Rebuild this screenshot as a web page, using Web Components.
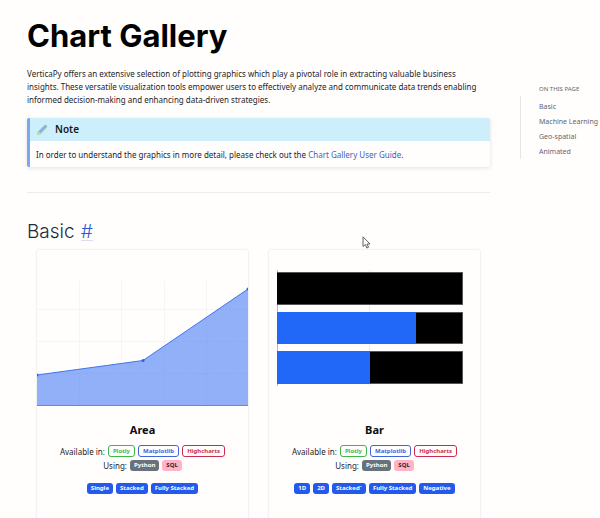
<!DOCTYPE html>
<html lang="en">
<head>
<meta charset="utf-8">
<title>Chart Gallery</title>
<style>
html, body { margin: 0; background: #fffefd; }
body { font: 8px/13px "Noto Sans", "Open Sans", sans-serif; color: #1e2329; height: 100vh; overflow: hidden; }
</style>
</head>
<body>
<gallery-page>
  <page-heading>Chart Gallery</page-heading>
  <page-intro>VerticaPy offers an extensive selection of plotting graphics which play a pivotal role in extracting valuable business insights. These versatile visualization tools empower users to effectively analyze and communicate data trends enabling informed decision-making and enhancing data-driven strategies.</page-intro>
  <note-box heading="Note">In order to understand the graphics in more detail, please check out the <text-link href="#guide">Chart Gallery User Guide</text-link>.</note-box>
  <gallery-section heading="Basic" anchor="basic">
    <chart-card heading="Area">
      <area-chart slot="chart"></area-chart>
      <tag-badge slot="libs" kind="plotly">Plotly</tag-badge>
      <tag-badge slot="libs" kind="matplotlib">Matplotlib</tag-badge>
      <tag-badge slot="libs" kind="highcharts">Highcharts</tag-badge>
      <tag-badge slot="langs" kind="python">Python</tag-badge>
      <tag-badge slot="langs" kind="sql">SQL</tag-badge>
      <tag-badge>Single</tag-badge>
      <tag-badge>Stacked</tag-badge>
      <tag-badge>Fully Stacked</tag-badge>
    </chart-card>
    <chart-card heading="Bar">
      <bar-chart slot="chart"></bar-chart>
      <tag-badge slot="libs" kind="plotly">Plotly</tag-badge>
      <tag-badge slot="libs" kind="matplotlib">Matplotlib</tag-badge>
      <tag-badge slot="libs" kind="highcharts">Highcharts</tag-badge>
      <tag-badge slot="langs" kind="python">Python</tag-badge>
      <tag-badge slot="langs" kind="sql">SQL</tag-badge>
      <tag-badge>1D</tag-badge>
      <tag-badge>2D</tag-badge>
      <tag-badge>Stacked`</tag-badge>
      <tag-badge>Fully Stacked</tag-badge>
      <tag-badge>Negative</tag-badge>
    </chart-card>
  </gallery-section>
  <page-toc slot="aside" heading="ON THIS PAGE">
    <toc-link href="#basic">Basic</toc-link>
    <toc-link href="#machine-learning">Machine Learning</toc-link>
    <toc-link href="#geo-spatial">Geo-spatial</toc-link>
    <toc-link href="#animated">Animated</toc-link>
  </page-toc>
</gallery-page>
<mouse-pointer></mouse-pointer>
<script>
function define(name, render) {
  customElements.define(name, class extends HTMLElement {
    constructor() {
      super();
      this.attachShadow({ mode: 'open' });
    }
    connectedCallback() {
      this.shadowRoot.innerHTML = render(this);
    }
  });
}
const attr = (el, name) => el.getAttribute(name) || '';

define('gallery-page', () => `
  <style>
    :host { display: grid; grid-template-columns: minmax(0, 1fr) 80px; column-gap: 30px; padding-left: 27px; }
    main { min-width: 0; }
    aside { padding-top: 83px; }
  </style>
  <main><slot></slot></main>
  <aside><slot name="aside"></slot></aside>`);

define('page-heading', () => `
  <style>
    :host { display: block; padding-top: 16px; }
    h1 { margin: 0; font: 700 31px/40px Inter, sans-serif; color: #000; }
  </style>
  <h1><slot></slot></h1>`);

define('page-intro', () => `
  <style>
    :host { display: block; padding: 11px 8px 0 0; }
    p { margin: 0; }
  </style>
  <p><slot></slot></p>`);

define('note-box', el => `
  <style>
    :host { display: block; margin-top: 12px; border-left: 3px solid #7da7ec; border-radius: 2px; overflow: hidden; box-shadow: 0 1px 4px #0000001f; background: #fffefd; }
    header { display: flex; align-items: center; gap: 7px; height: 23px; padding-left: 7px; background: #cdeffc; font-size: 10px; font-weight: 600; color: #14181d; }
    svg { width: 11px; height: 11px; }
    p { margin: 0; padding: 7px 6px 6px; }
  </style>
  <header>
    <svg viewBox="0 0 11 11" aria-hidden="true">
      <path d="M0 11 L0 8 L7.500 1 Q9 0 10 1 Q11 2 10 4 L4 10.500 Z" fill="#aee6b4"/>
      <path d="M1.500 7.500 L7.500 1.500 Q8.500 .800 9.200 1.500 Q10 2.300 9.200 3.200 L3.300 9 Z" fill="#7fa0e6"/>
      <path d="M2.500 8 L8.500 2" stroke="#a3b6f0" fill="none"/>
      <path d="M0 11 L.800 8.500 L2.500 10 Z" fill="#9bdd98"/>
    </svg>${attr(el, 'heading')}
  </header>
  <p><slot></slot></p>`);

define('text-link', el => `
  <style>
    a { color: #3f5fc4; text-decoration: none; }
  </style>
  <a href="${attr(el, 'href')}"><slot></slot></a>`);

define('gallery-section', el => `
  <style>
    :host { display: block; margin-top: 25px; border-top: 1px solid #ececee; padding-top: 26px; }
    h2 { display: flex; gap: 6px; margin: 0; font: 300 19px/25px Inter, sans-serif; color: #232b38; }
    a { color: #3355cc; text-decoration: none; line-height: 25px; height: 21px; border-bottom: 1px solid #dcdcea; }
    .cards { display: grid; grid-template-columns: repeat(2, minmax(0, 1fr)); gap: 19px; padding: 5px 9px 0; }
  </style>
  <h2 id="${attr(el, 'anchor')}">${attr(el, 'heading')}<a href="#${attr(el, 'anchor')}">#</a></h2>
  <div class="cards"><slot></slot></div>`);

define('chart-card', el => `
  <style>
    :host { display: block; border: 1px solid #f3f2f3; border-radius: 3px; box-shadow: 0 0 2px #00000008; text-align: center; padding-bottom: 40px; }
    h3 { margin: 15px 0 6px; font-size: 11px; line-height: 16px; font-weight: 700; color: #0c0d10; }
    .row { display: flex; justify-content: center; align-items: center; gap: 3px; height: 14px; }
    .kinds { margin-top: 9px; }
  </style>
  <slot name="chart"></slot>
  <h3>${attr(el, 'heading')}</h3>
  <div class="row"><span>Available in:</span><slot name="libs"></slot></div>
  <div class="row"><span>Using:</span><slot name="langs"></slot></div>
  <div class="row kinds"><slot></slot></div>`);

define('tag-badge', () => `
  <style>
    :host { display: block; padding: 1px 4px; border-radius: 3px; font-size: 6px; line-height: 9px; font-weight: 700; white-space: nowrap; background: #2459ee; color: #fff; }
    :host([slot="libs"]) { border: 1px solid currentColor; line-height: 8px; background: none; }
    :host([kind="plotly"]) { color: #43b649; }
    :host([kind="matplotlib"]) { color: #3f64dd; }
    :host([kind="highcharts"]) { color: #cb2c4d; }
    :host([kind="python"]) { background: #69717a; }
    :host([kind="sql"]) { background: #ffb3c6; color: #33202a; }
  </style>
  <slot></slot>`);

define('area-chart', () => `
  <style>
    :host { display: block; }
    svg { display: block; width: 100%; height: 157px; }
  </style>
  <svg viewBox="0 0 211 157" preserveAspectRatio="none" role="img" aria-label="Area chart">
    <path d="M42.500 31V156 M84.500 31V156 M127.500 31V156 M169.500 31V156 M0 59.500H211 M0 91.500H211 M0 123.500H211" stroke="#f5f5f6" fill="none"/>
    <path d="M0 125 L106 110.500 L211 39 V156 H0 Z" fill="#91b0f8"/>
    <path d="M42.500 123V156 M127.500 98V156 M169.500 69V156 M180 59.500H211 M134 91.500H211 M14 123.500H211" stroke="#86a6f0" stroke-dasharray="1 2" fill="none"/>
    <path d="M0 125 L106 110.500 L211 39" stroke="#3f74ec" fill="none"/>
    <path d="M0 155.500H211" stroke="#7189c3" fill="none"/>
    <circle cx="0" cy="125" r="1.500" fill="#2c62e8"/>
    <circle cx="106" cy="110.500" r="1.500" fill="#2c62e8"/>
    <circle cx="211" cy="39" r="1.500" fill="#2c62e8"/>
  </svg>`);

define('bar-chart', () => `
  <style>
    :host { display: block; }
    svg { display: block; width: 100%; height: 157px; }
  </style>
  <svg viewBox="0 0 211 157" preserveAspectRatio="none" role="img" aria-label="Bar chart">
    <path d="M100.500 20V136" stroke="#ececec" fill="none"/>
    <path d="M8.500 20V136" stroke="#b9b9bb" fill="none"/>
    <path d="M8 22H194V55H8Z M147 62H194V94H147Z M101 101H194V134H101Z" fill="#000"/>
    <path d="M8 62H147V94H8Z M8 101H101V134H8Z" fill="#2268f8"/>
    <path d="M8 22.500H194 M8 54.500H194 M147 62.500H194 M147 93.500H194 M101 101.500H194 M101 133.500H194 M193.500 22V55 M193.500 62V94 M193.500 101V134" stroke="#555" fill="none"/>
  </svg>`);

define('page-toc', el => `
  <style>
    :host { display: block; font-size: 7px; color: #5f6571; }
    h2 { margin: 0; padding-left: 19px; font-size: 6px; line-height: 13px; font-weight: 400; white-space: nowrap; }
    nav { display: grid; border-left: 1px solid #e6e6e8; padding-left: 18px; line-height: 15px; padding-top: 3px; }
  </style>
  <h2>${attr(el, 'heading')}</h2>
  <nav aria-label="On this page"><slot></slot></nav>`);

define('toc-link', el => `
  <style>
    :host { display: block; }
    a { color: inherit; text-decoration: none; white-space: nowrap; }
  </style>
  <a href="${attr(el, 'href')}"><slot></slot></a>`);

define('mouse-pointer', () => `
  <style>
    :host { position: absolute; left: 362px; top: 236px; width: 9px; height: 13px; pointer-events: none; }
    svg { display: block; }
  </style>
  <svg width="9" height="13" viewBox="0 0 9 13" aria-hidden="true">
    <path d="M1 .800 V10.500 L3.300 8.500 L4.800 12 L6.500 11.300 L5 8 H8 Z" fill="#fff" stroke="#50505a" stroke-width=".9"/>
  </svg>`);
</script>
</body>
</html>
